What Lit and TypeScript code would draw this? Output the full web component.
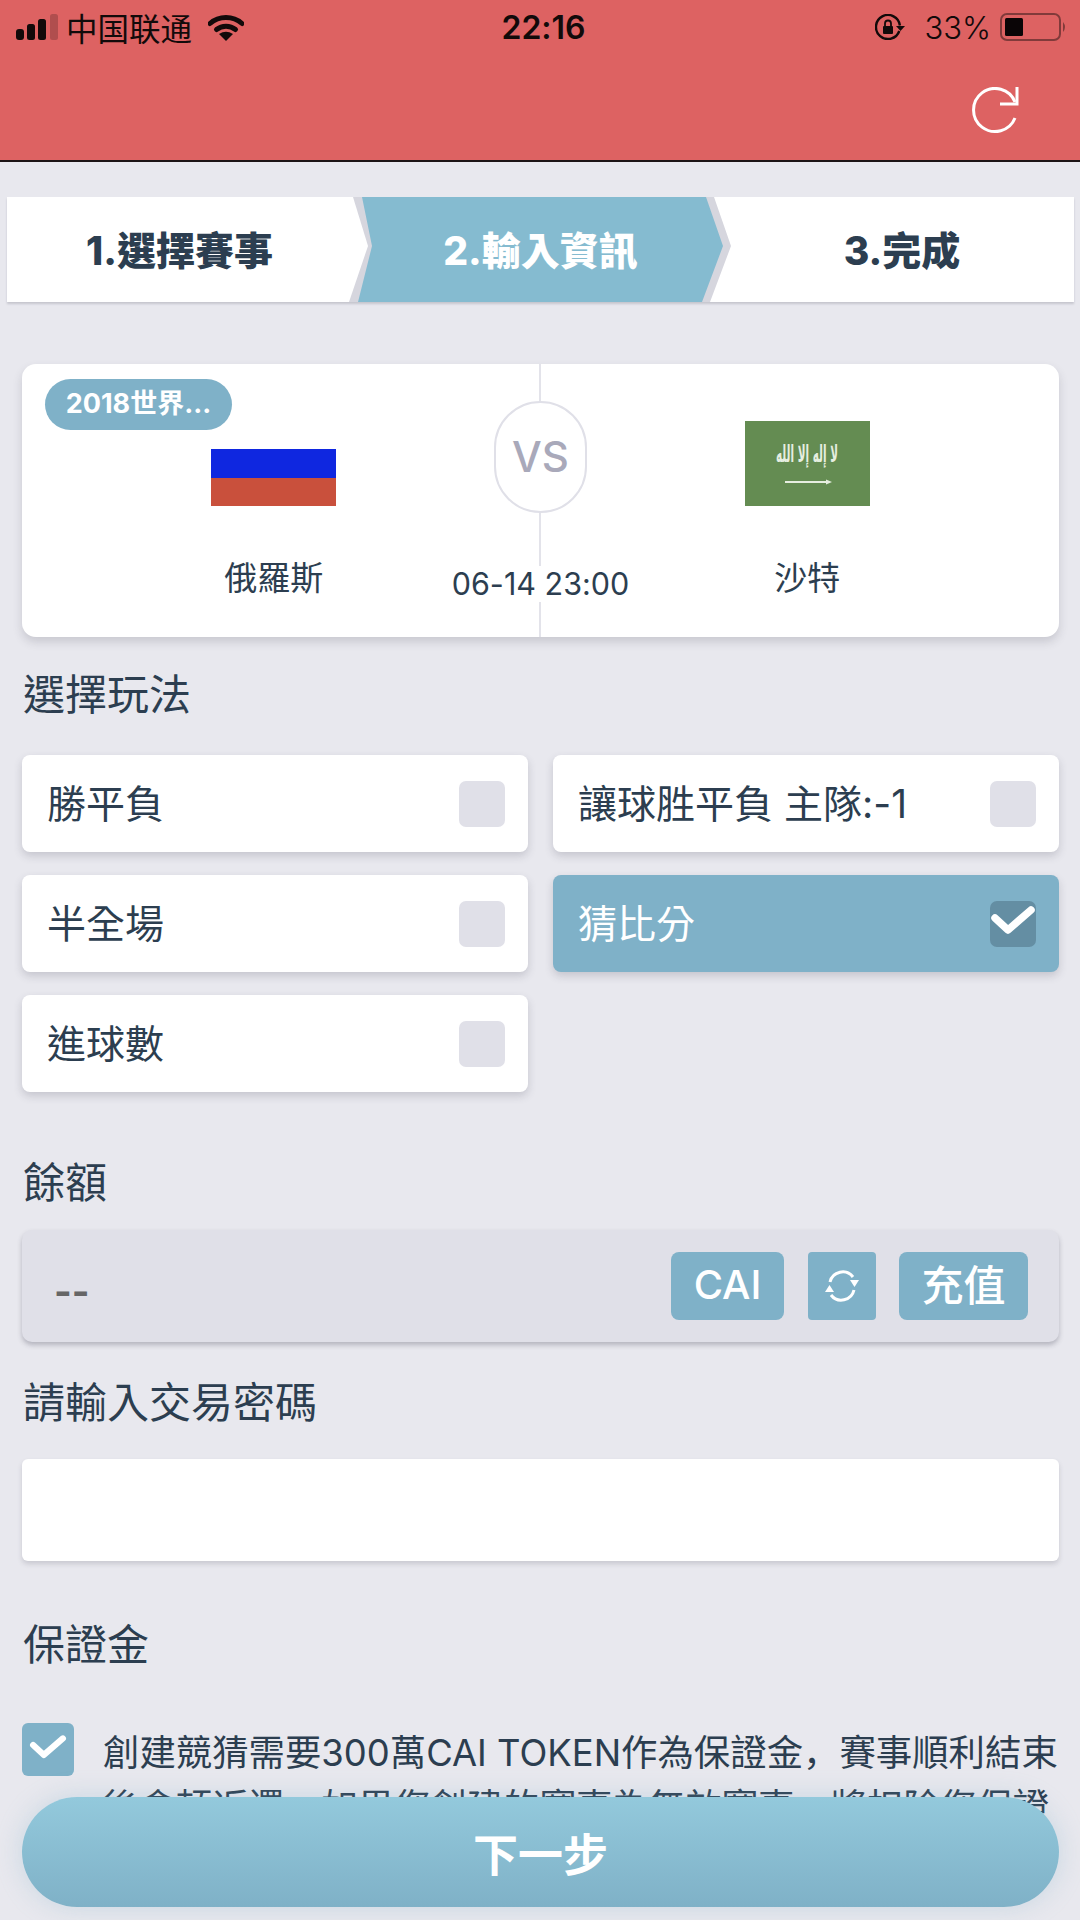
import { LitElement, html, css, svg } from 'lit';
import { customElement } from 'lit/decorators.js';
import { classMap } from 'lit/directives/class-map.js';

const options = [
  { label: '勝平負', checked: false },
  { label: '讓球胜平負 主隊:-1', checked: false },
  { label: '半全場', checked: false },
  { label: '猜比分', checked: true },
  { label: '進球數', checked: false },
];

const check = svg`<path d="M5 17 L18 29 L41 9" fill="none" stroke="#fff" stroke-width="7.5" stroke-linecap="round" stroke-linejoin="round"/>`;

@customElement('app-root')
export class AppRoot extends LitElement {
  static styles = css`
    :host {
      display: block;
      position: relative;
      width: 1080px;
      height: 1920px;
      overflow: hidden;
      background: #e8e8ee;
      color: #2c3e50;
      font-family: Inter, "Noto Sans CJK TC", sans-serif;
      font-feature-settings: "calt" 0;
    }
    .header {
      height: 160px;
      background: #dd6262;
      border-bottom: 2px solid #1c1416;
      box-sizing: content-box;
      color: #120a0a;
    }
    .status {
      display: grid;
      grid-template-columns: 1fr auto 1fr;
      align-items: center;
      height: 54px;
      padding: 0 13px 0 16px;
      font-size: 30px;
    }
    .status-left,
    .status-right {
      display: flex;
      align-items: center;
    }
    .status-right {
      justify-content: flex-end;
    }
    .carrier {
      margin: 0 16px 0 8px;
      font-family: "Noto Sans CJK SC", sans-serif;
      font-size: 31.5px;
      line-height: 40px;
    }
    .time {
      font-size: 32px;
      font-weight: 600;
      margin-left: 4px;
    }
    .pct {
      margin: 0 9px 0 19px;
      font-weight: 300;
      font-size: 31px;
    }
    .reload-row {
      display: flex;
      justify-content: flex-end;
      padding: 33px 60px 0 0;
    }
    svg {
      display: block;
    }
    .steps {
      display: flex;
      width: 1067px;
      height: 105px;
      margin: 35px 0 0 7px;
      background: #d6d6de;
      box-shadow: 0 2px 2px rgba(60, 60, 80, 0.2);
      font-size: 39px;
      font-weight: 800;
    }
    .step {
      display: flex;
      align-items: center;
      justify-content: center;
      flex: none;
      padding-bottom: 3px;
      background: #fff;
      box-sizing: border-box;
    }
    .step-1 {
      width: 361px;
      padding-right: 16px;
      clip-path: polygon(0 0, 346px 0, 361px 49px, 342px 105px, 0 105px);
    }
    .step-2 {
      width: 365px;
      margin-left: -10px;
      background: #85bbd0;
      color: #fff;
      clip-path: polygon(4px 0, 348px 0, 365px 49px, 344px 105px, 0 105px, 14px 49px);
    }
    .step-3 {
      width: 364px;
      margin-left: -13px;
      padding-left: 20px;
      clip-path: polygon(4px 0, 364px 0, 364px 105px, 0 105px, 21px 49px);
    }
    .content {
      padding: 0 21px 0 22px;
    }
    .card {
      position: relative;
      display: grid;
      grid-template-columns: 1fr 186px 1fr;
      align-items: start;
      height: 273px;
      margin-top: 62px;
      padding: 0 78px;
      box-sizing: border-box;
      background: #fff;
      border-radius: 14px;
      box-shadow: 0 5px 10px rgba(60, 60, 80, 0.18);
    }
    .divider {
      position: absolute;
      left: 517px;
      top: 0;
      bottom: 0;
      width: 2px;
      background: #e3e3ea;
    }
    .badge {
      position: absolute;
      left: 23px;
      top: 15px;
      width: 187px;
      height: 51px;
      border-radius: 26px;
      background: #7fb1c8;
      color: #fff;
      font-size: 27px;
      font-weight: 700;
      line-height: 49px;
      text-align: center;
    }
    .team {
      display: flex;
      flex-direction: column;
      align-items: center;
      padding-top: 57px;
    }
    .flag-box {
      display: flex;
      align-items: flex-end;
      height: 85px;
    }
    .team-name {
      margin-top: 50px;
      font-size: 33px;
      line-height: 44px;
    }
    .middle {
      position: relative;
      display: flex;
      flex-direction: column;
      align-items: center;
      padding-top: 37px;
    }
    .vs {
      display: flex;
      align-items: center;
      justify-content: center;
      width: 93px;
      height: 112px;
      box-sizing: border-box;
      border: 2px solid #e0e0e8;
      border-radius: 47px;
      background: #fff;
      color: #a9a9ba;
      font-size: 42px;
      font-weight: 500;
      padding-bottom: 2px;
    }
    .date {
      margin-top: 53px;
      background: #fff;
      font-size: 30.5px;
      line-height: 36px;
      white-space: nowrap;
    }
    .label {
      margin-left: 1px;
      font-size: 42px;
      line-height: 50px;
    }
    .label-play {
      margin-top: 33px;
    }
    .options {
      display: grid;
      grid-template-columns: 506px 506px;
      column-gap: 25px;
      row-gap: 23px;
      margin-top: 35px;
    }
    .option {
      display: flex;
      align-items: center;
      justify-content: space-between;
      height: 97px;
      padding: 0 23px 0 25px;
      box-sizing: border-box;
      background: #fff;
      border-radius: 8px;
      box-shadow: 0 4px 9px rgba(60, 60, 80, 0.2);
      font-size: 39px;
    }
    .option span {
      padding-bottom: 6px;
    }
    .option.on {
      background: #7fb1c8;
      color: #fff;
    }
    .box {
      display: flex;
      align-items: center;
      justify-content: center;
      width: 46px;
      height: 46px;
      border-radius: 7px;
      background: #e0e0e8;
    }
    .option.on .box {
      background: #648ea3;
    }
    .label-balance {
      margin-top: 66px;
    }
    .balance {
      display: flex;
      align-items: center;
      height: 112px;
      margin-top: 22px;
      padding: 0 31px 0 32px;
      box-sizing: border-box;
      background: #e0e0e8;
      border-radius: 10px;
      box-shadow: 0 3px 5px rgba(60, 60, 80, 0.3);
    }
    .amount {
      flex: 1;
      padding-top: 9px;
      color: #666;
      font-size: 38px;
      font-weight: 700;
    }
    .btn {
      display: flex;
      align-items: center;
      justify-content: center;
      height: 68px;
      border-radius: 8px;
      background: #7fb1c8;
      color: #fff;
      font-weight: 500;
    }
    .btn-cai {
      width: 113px;
      font-size: 40px;
      padding-bottom: 3px;
      box-sizing: border-box;
    }
    .btn-sync {
      width: 68px;
      margin: 0 23px 0 24px;
      border-radius: 4px;
    }
    .btn-top {
      width: 129px;
      font-size: 42px;
      padding-bottom: 7px;
      box-sizing: border-box;
    }
    .label-pass {
      margin-top: 36px;
    }
    .pass {
      height: 102px;
      margin-top: 31px;
      background: #fff;
      border-radius: 6px;
      box-shadow: 0 3px 5px rgba(60, 60, 80, 0.18);
    }
    .label-deposit {
      margin-top: 59px;
    }
    .deposit {
      display: flex;
      align-items: flex-start;
      margin-top: 53px;
    }
    .deposit-box {
      flex: none;
      display: flex;
      align-items: center;
      justify-content: center;
      width: 52px;
      height: 53px;
      border-radius: 6px;
      background: #7fb1c8;
    }
    .deposit-text {
      margin: 3px 0 0 29px;
      font-family: Inter, "Noto Sans CJK SC", sans-serif;
      font-size: 36.4px;
      line-height: 54px;
    }
    .next {
      position: absolute;
      left: 22px;
      right: 21px;
      bottom: 13px;
      display: flex;
      align-items: center;
      justify-content: center;
      height: 110px;
      border-radius: 55px;
      background: linear-gradient(#93c9dc, #7fb1c7);
      box-shadow: 0 0 26px rgba(127, 177, 200, 0.3);
      color: #fff;
      font-size: 45px;
      font-weight: 700;
    }
  `;

  renderStatus() {
    return html`
      <div class="status">
        <div class="status-left">
          <svg width="42" height="26" viewBox="0 0 42 26">
            <rect x="0" y="15" width="8" height="11" rx="3" fill="#120a0a"/>
            <rect x="11" y="10" width="8" height="16" rx="2.5" fill="#120a0a"/>
            <rect x="22" y="5" width="8" height="21" rx="2.5" fill="#120a0a"/>
            <rect x="34" y="0" width="8" height="26" rx="2.5" fill="#120a0a" opacity="0.22"/>
          </svg>
          <span class="carrier">中国联通</span>
          <svg width="36" height="27" viewBox="0 0 36 27">
            <path d="M2 9.5 C11 1.5 25 1.5 34 9.5" fill="none" stroke="#120a0a" stroke-width="5" stroke-linecap="round"/>
            <path d="M8.5 15.5 C14 11 22 11 27.5 15.5" fill="none" stroke="#120a0a" stroke-width="5" stroke-linecap="round"/>
            <path d="M11 20 Q18 15.5 25 20 L18 27 Z" fill="#120a0a"/>
          </svg>
        </div>
        <span class="time">22:16</span>
        <div class="status-right">
          <svg width="30" height="26" viewBox="0 0 30 26">
            <path d="M24.3 17 A12 12 0 1 1 24.9 11.5" fill="none" stroke="#120a0a" stroke-width="2.4"/>
            <path d="M21 12 H30 L25.5 17 Z" fill="#120a0a"/>
            <rect x="8" y="12" width="10" height="8" rx="1" fill="#120a0a"/>
            <path d="M10 12 V9.5 A3 3 0 0 1 16 9.5 V12" fill="none" stroke="#120a0a" stroke-width="1.8"/>
          </svg>
          <span class="pct">33%</span>
          <svg width="67" height="28" viewBox="0 0 67 28">
            <rect x="1" y="1" width="59" height="26" rx="6" fill="none" stroke="#120a0a" stroke-opacity="0.45" stroke-width="2"/>
            <rect x="5" y="5" width="18" height="18" rx="1.5" fill="#0a0506"/>
            <path d="M63 9 Q67 14 63 19 Z" fill="#120a0a" fill-opacity="0.45"/>
          </svg>
        </div>
      </div>
    `;
  }

  renderSaudiFlag() {
    return html`
      <svg width="125" height="85" viewBox="0 0 125 85">
        <rect width="125" height="85" fill="#648c52"/>
        <text x="62" y="41" text-anchor="middle" textLength="62" lengthAdjust="spacingAndGlyphs"
          font-family="DejaVu Sans" font-size="24" font-weight="700" fill="#e6eee0">لا إله إلا الله</text>
        <path d="M40 61 H84" stroke="#e6eee0" stroke-width="2"/>
        <path d="M81 58.5 L87 61 L81 63.5 Z" fill="#e6eee0"/>
      </svg>
    `;
  }

  render() {
    return html`
      <div class="header">
        ${this.renderStatus()}
        <div class="reload-row">
          <svg width="48" height="48" viewBox="0 0 48 48">
            <path d="M43 31 A21.5 21.5 0 1 1 43 15" fill="none" stroke="#fff" stroke-width="3"/>
            <path d="M45 0 V17 H28" fill="none" stroke="#fff" stroke-width="3"/>
          </svg>
        </div>
      </div>

      <div class="steps">
        <div class="step step-1">1.選擇賽事</div>
        <div class="step step-2">2.輸入資訊</div>
        <div class="step step-3">3.完成</div>
      </div>

      <div class="content">
        <div class="card">
          <div class="divider"></div>
          <div class="badge">2018世界...</div>
          <div class="team">
            <div class="flag-box">
              <svg width="125" height="57" viewBox="0 0 125 57">
                <rect width="125" height="29" fill="#0f27e0"/>
                <rect y="29" width="125" height="28" fill="#c9503c"/>
              </svg>
            </div>
            <div class="team-name">俄羅斯</div>
          </div>
          <div class="middle">
            <div class="vs">VS</div>
            <div class="date">06-14 23:00</div>
          </div>
          <div class="team">
            <div class="flag-box">${this.renderSaudiFlag()}</div>
            <div class="team-name">沙特</div>
          </div>
        </div>

        <div class="label label-play">選擇玩法</div>
        <div class="options">
          ${options.map(
            (o) => html`
              <div class=${classMap({ option: true, on: o.checked })}>
                <span>${o.label}</span>
                <div class="box">
                  ${o.checked ? html`<svg width="46" height="46" viewBox="0 0 46 46">${check}</svg>` : ''}
                </div>
              </div>
            `
          )}
        </div>

        <div class="label label-balance">餘額</div>
        <div class="balance">
          <span class="amount">--</span>
          <div class="btn btn-cai">CAI</div>
          <div class="btn btn-sync">
            <svg width="38" height="38" viewBox="0 0 38 38">
              <path d="M7 15 A13 13 0 0 1 30 10" fill="none" stroke="#fff" stroke-width="3"/>
              <path d="M31 23 A13 13 0 0 1 8 28" fill="none" stroke="#fff" stroke-width="3"/>
              <path d="M27 13 L36 13 L31.5 20 Z" fill="#fff"/>
              <path d="M2 25 L11 25 L6.5 18 Z" fill="#fff"/>
            </svg>
          </div>
          <div class="btn btn-top">充值</div>
        </div>

        <div class="label label-pass">請輸入交易密碼</div>
        <div class="pass"></div>

        <div class="label label-deposit">保證金</div>
        <div class="deposit">
          <div class="deposit-box">
            <svg width="38" height="38" viewBox="0 0 46 46">${check}</svg>
          </div>
          <div class="deposit-text">創建競猜需要300萬CAI TOKEN作為保證金，賽事順利結束後會頓返還，如果您創建的賽事為無效賽事，將扣除您保證金。</div>
        </div>
      </div>

      <div class="next">下一步</div>
    `;
  }
}
